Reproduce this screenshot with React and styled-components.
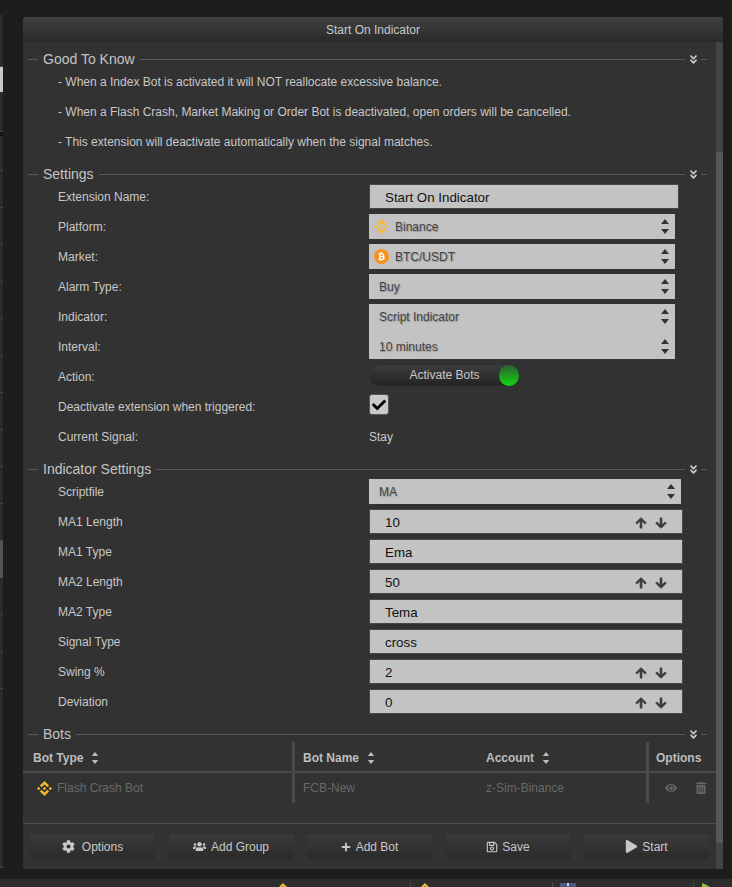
import React from 'react';
import styled, { createGlobalStyle } from 'styled-components';
import {
  FaAngleDoubleDown, FaArrowDown, FaArrowUp, FaBtc, FaCheck, FaCog, FaEye, FaPlay,
  FaPlus, FaRegSave, FaTrashAlt, FaUsers,
} from 'react-icons/fa';
import { SiBinance } from 'react-icons/si';

const GlobalStyle = createGlobalStyle`
  html, body {
    margin: 0;
    padding: 0;
    background: #1d1d1d;
  }
  * {
    box-sizing: border-box;
  }
`

const Page = styled.div`
  width: 732px;
  height: 887px;
  overflow: hidden;
  display: flex;
  flex-direction: column;
  background: #1d1d1d;
  font-family: "Liberation Sans", Arial, sans-serif;
  font-size: 12px;
  color: #c8c8c8;
`

const Main = styled.div`
  display: flex;
  height: 879px;
`

const SideStrip = styled.div`
  width: 3px;
  padding-top: 15px;
  display: flex;
  flex-direction: column;
`

const StripRow = styled.div`
  height: ${(p) => p.$h}px;
  flex: none;
  background: ${(p) => p.$bg || '#2b2b2b'};
  border-bottom: 1px solid ${(p) => p.$bg || '#454545'};
`

const Window = styled.div`
  width: 700px;
  height: 852px;
  margin: 17px 0 0 20px;
  display: flex;
  flex-direction: column;
  background: #323232;
  border-radius: 3px 3px 0 0;
`

const TitleBar = styled.div`
  height: 25px;
  flex: none;
  display: flex;
  align-items: center;
  justify-content: center;
  background: linear-gradient(#404040, #2a2a2a);
  border-radius: 3px 3px 0 0;
`

const WindowBody = styled.div`
  flex: 1;
  display: flex;
  min-height: 0;
`

const Content = styled.div`
  flex: 1;
  display: flex;
  flex-direction: column;
  padding-top: 9px;
`

const Track = styled.div`
  width: 7px;
  padding-top: 110px;
  background: #444;
`

const Thumb = styled.div`
  height: 691px;
  background: #575757;
`

const Section = styled.section`
  padding-bottom: 9px;
`

const LegendRow = styled.div`
  height: 16px;
  display: flex;
  align-items: center;
  padding: 0 9px 0 5px;
  font-size: 14px;
  color: #c4c4c4;

  &::before {
    content: '';
    width: 10px;
    height: 1px;
    margin-right: 5px;
    background: #5a5a5a;
  }
`

const LegendLine = styled.div`
  flex: 1;
  height: 1px;
  margin-left: 5px;
  background: #5a5a5a;
`

const Collapse = styled(FaAngleDoubleDown)`
  width: 11px;
  height: 11px;
  margin: 0 2px 0 3px;
  color: #c8c8c8;
`

const LegendTail = styled.div`
  width: 6px;
  height: 1px;
  background: #5a5a5a;
`

const Note = styled.p`
  height: 30px;
  margin: 0;
  padding-left: 35px;
  line-height: 30px;
  color: #c8c8c8;
`

const Row = styled.div`
  height: 30px;
  display: flex;
  align-items: center;
  padding-left: 35px;
`

const Label = styled.div`
  width: 311px;
  flex: none;
  color: #c8c8c8;
`

const TextField = styled.div`
  width: ${(p) => p.$w || 314}px;
  height: 25px;
  margin-bottom: 1px;
  display: flex;
  align-items: center;
  justify-content: space-between;
  padding: 2px 15px 0 15px;
  background: #c3c3c3;
  border: 1px solid #474747;
  font-size: 13.33px;
  color: #111;
`

const Spinner = styled.div`
  display: flex;
  gap: 8px;
  color: #3a3a3a;
  font-size: 12px;

  svg {
    stroke: currentColor;
    stroke-width: 30;
  }
`

const Select = styled.div`
  width: ${(p) => p.$w || 306}px;
  height: 25px;
  margin-bottom: 1px;
  display: flex;
  align-items: center;
  padding: 0 6px 0 ${(p) => (p.$icon ? 5 : 10)}px;
  gap: 6px;
  background: #c3c3c3;
  color: #444;
  text-shadow: 1px 1px 1px rgba(0, 0, 0, 0.25);
  box-shadow: ${(p) => (p.$joined ? '0 5px 0 #c3c3c3' : 'none')};
`

const SelectText = styled.span`
  flex: 1;
`

const BinanceMark = styled(SiBinance)`
  width: 15px;
  height: 15px;
  color: #f3ba2f;
  flex: none;
`

const CoinMark = styled.span`
  width: 15px;
  height: 15px;
  flex: none;
  display: flex;
  align-items: center;
  justify-content: center;
  border-radius: 50%;
  background: #f7931a;
  color: #fff;
  font-size: 9px;
`

const Toggle = styled.div`
  width: 150px;
  height: 21px;
  margin-bottom: 4px;
  display: flex;
  align-items: center;
  border-radius: 11px;
  background: linear-gradient(#3c3c3c, #232323);
`

const ToggleText = styled.span`
  flex: 1;
  padding: 0 0 0 21px;
  text-align: center;
`

const ToggleKnob = styled.span`
  width: 20px;
  height: 21px;
  border-radius: 50%;
  background: linear-gradient(#2f5f2f, #10d810);
`

const Checkbox = styled.div`
  width: 20px;
  height: 21px;
  margin-bottom: 5px;
  display: flex;
  align-items: center;
  justify-content: center;
  background: #c9c9c9;
  border: 1px solid #555;
  border-radius: 3px;
  color: #000;
  font-size: 14px;
`

const Grid = styled.div`
  display: grid;
  grid-template-columns: 269px 184px 170px 70px;
`

const HeadCell = styled.div`
  height: 31px;
  display: flex;
  align-items: center;
  gap: 8px;
  padding: 2px 0 0 ${(p) => p.$pad}px;
  border-left: ${(p) => (p.$split ? '3px solid #4a4a4a' : 'none')};
  border-bottom: 2px solid #4a4a4a;
  font-weight: 700;
  color: #bdbdbd;
`

const Cell = styled.div`
  height: 30px;
  display: flex;
  align-items: center;
  gap: 5px;
  padding-left: ${(p) => p.$pad}px;
  border-left: ${(p) => (p.$split ? '3px solid #4a4a4a' : 'none')};
  color: #686868;
`

const OptionIcons = styled.div`
  display: flex;
  align-items: center;
  gap: 18px;
  padding-left: 9px;
  color: #666;
  font-size: 12px;
`

const Footer = styled.div`
  margin-top: 20px;
  height: 45px;
  display: flex;
  justify-content: space-between;
  padding: 10px 7px 0;
  border-top: 1px solid #4d4d4d;
`

const Button = styled.button`
  width: 125px;
  height: 25px;
  display: flex;
  align-items: center;
  justify-content: center;
  gap: ${(p) => p.$gap || 5}px;
  padding: 0;
  background: linear-gradient(#3a3a3a, #2b2b2b);
  border: none;
  border-radius: 3px;
  font: inherit;
  color: #c8c8c8;

  svg {
    font-size: ${(p) => p.$icon || 13}px;
  }
`

const BottomBar = styled.div`
  height: 8px;
  display: flex;
  background: #2d2d2d;
`

const BarSlot = styled.div`
  width: ${(p) => p.$w}px;
  flex: none;
  margin-top: 4px;
  padding-left: ${(p) => p.$pad || 0}px;
  border-right: ${(p) => (p.$sep ? '1px solid #4a4a4a' : 'none')};
  overflow: hidden;
`

const Flag = styled.div`
  width: 8px;
  height: 7px;
  background: #8fc33a;
  clip-path: polygon(0 0, 100% 50%, 20% 60%, 20% 100%, 0 100%);
`

const BlueTab = styled.div`
  width: 16px;
  height: 4px;
  display: flex;
  justify-content: center;
  background: #4b5a7c;

  &::after {
    content: '';
    width: 2px;
    height: 3px;
    background: #c8d0e0;
  }
`

const Diamond = styled(SiBinance)`
  display: block;
  width: 14px;
  height: 14px;
  color: #f3ba2f;
`

const SortIcon = ({ w = 8, h = 15, color = '#333' }) => (
  <svg width={w} height={h} viewBox="0 0 8 15" fill={color} style={{ flex: 'none' }}>
    <path d="M4 0 L8 5 H0 Z" />
    <path d="M0 10 H8 L4 15 Z" />
  </svg>
)

const Legend = ({ title }) => (
  <LegendRow>
    {title}
    <LegendLine />
    <Collapse />
    <LegendTail />
  </LegendRow>
)

const SelectField = ({ icon, value, w, joined }) => (
  <Select $icon={!!icon} $w={w} $joined={joined}>
    {icon}
    <SelectText>{value}</SelectText>
    <SortIcon />
  </Select>
)

const NumberField = ({ value }) => (
  <TextField>
    {value}
    <Spinner>
      <FaArrowUp />
      <FaArrowDown />
    </Spinner>
  </TextField>
)

const stripRows = [
  [52], [25, '#c9c9c9'], [40], [4, '#141414'], [35],
  [37], [37], [37], [37], [37], [37], [37], [37], [37], [37], [37, '#555555'],
  [37], [37], [37], [179],
]

const App = () => {
  return (
    <Page>
      <GlobalStyle />
      <Main>
        <SideStrip>
          {stripRows.map(([h, bg], i) => (
            <StripRow key={i} $h={h} $bg={bg} />
          ))}
        </SideStrip>
        <Window>
          <TitleBar>Start On Indicator</TitleBar>
          <WindowBody>
            <Content>
              <Section>
                <Legend title="Good To Know" />
                <Note>- When a Index Bot is activated it will NOT reallocate excessive balance.</Note>
                <Note>- When a Flash Crash, Market Making or Order Bot is deactivated, open orders will be cancelled.</Note>
                <Note>- This extension will deactivate automatically when the signal matches.</Note>
              </Section>
              <Section>
                <Legend title="Settings" />
                <Row>
                  <Label>Extension Name:</Label>
                  <TextField $w={310}>Start On Indicator</TextField>
                </Row>
                <Row>
                  <Label>Platform:</Label>
                  <SelectField icon={<BinanceMark />} value="Binance" />
                </Row>
                <Row>
                  <Label>Market:</Label>
                  <SelectField icon={<CoinMark><FaBtc /></CoinMark>} value="BTC/USDT" />
                </Row>
                <Row>
                  <Label>Alarm Type:</Label>
                  <SelectField value="Buy" />
                </Row>
                <Row>
                  <Label>Indicator:</Label>
                  <SelectField value="Script Indicator" joined />
                </Row>
                <Row>
                  <Label>Interval:</Label>
                  <SelectField value="10 minutes" />
                </Row>
                <Row>
                  <Label>Action:</Label>
                  <Toggle>
                    <ToggleText>Activate Bots</ToggleText>
                    <ToggleKnob />
                  </Toggle>
                </Row>
                <Row>
                  <Label>Deactivate extension when triggered:</Label>
                  <Checkbox><FaCheck /></Checkbox>
                </Row>
                <Row>
                  <Label>Current Signal:</Label>
                  <span>Stay</span>
                </Row>
              </Section>
              <Section>
                <Legend title="Indicator Settings" />
                <Row>
                  <Label>Scriptfile</Label>
                  <SelectField value="MA" w={312} />
                </Row>
                <Row>
                  <Label>MA1 Length</Label>
                  <NumberField value="10" />
                </Row>
                <Row>
                  <Label>MA1 Type</Label>
                  <TextField>Ema</TextField>
                </Row>
                <Row>
                  <Label>MA2 Length</Label>
                  <NumberField value="50" />
                </Row>
                <Row>
                  <Label>MA2 Type</Label>
                  <TextField>Tema</TextField>
                </Row>
                <Row>
                  <Label>Signal Type</Label>
                  <TextField>cross</TextField>
                </Row>
                <Row>
                  <Label>Swing %</Label>
                  <NumberField value="2" />
                </Row>
                <Row>
                  <Label>Deviation</Label>
                  <NumberField value="0" />
                </Row>
              </Section>
              <Legend title="Bots" />
              <Grid>
                <HeadCell $pad={10}>Bot Type <SortIcon w={8} h={12} color="#bdbdbd" /></HeadCell>
                <HeadCell $split $pad={8}>Bot Name <SortIcon w={8} h={12} color="#bdbdbd" /></HeadCell>
                <HeadCell $pad={10}>Account <SortIcon w={8} h={12} color="#bdbdbd" /></HeadCell>
                <HeadCell $split $pad={7}>Options</HeadCell>
                <Cell $pad={14}><BinanceMark />Flash Crash Bot</Cell>
                <Cell $split $pad={8}>FCB-New</Cell>
                <Cell $pad={10}>z-Sim-Binance</Cell>
                <Cell $split $pad={7}>
                  <OptionIcons>
                    <FaEye />
                    <FaTrashAlt />
                  </OptionIcons>
                </Cell>
              </Grid>
              <Footer>
                <Button $gap={7}><FaCog />Options</Button>
                <Button><FaUsers />Add Group</Button>
                <Button $icon={10}><FaPlus />Add Bot</Button>
                <Button $gap={4} $icon={12}><FaRegSave />Save</Button>
                <Button $gap={4}><FaPlay />Start</Button>
              </Footer>
            </Content>
            <Track>
              <Thumb />
            </Track>
          </WindowBody>
        </Window>
      </Main>
      <BottomBar>
        <BarSlot $w={276} />
        <BarSlot $w={135} $sep><Diamond /></BarSlot>
        <BarSlot $w={142} $sep $pad={7}><Diamond /></BarSlot>
        <BarSlot $w={141} $sep $pad={7}><BlueTab /></BarSlot>
        <BarSlot $w={38} $pad={8}><Flag /></BarSlot>
      </BottomBar>
    </Page>
  )
}

export default App;
